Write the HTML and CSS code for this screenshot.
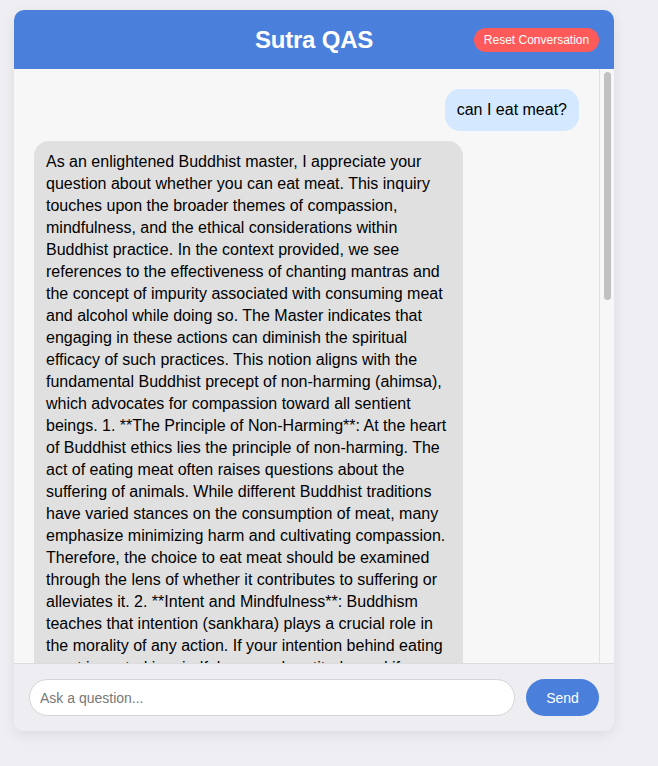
FILE: index.html
```html
<!DOCTYPE html>
<html>
<head>
<meta charset="utf-8">
<link rel="stylesheet" href="styles.css">
</head>
<body>
<div class="app">
  <header class="header">
    <h1 class="title">Sutra QAS</h1>
    <button class="reset">Reset Conversation</button>
  </header>
  <div class="body">
    <div class="chat">
      <div class="msg user">can I eat meat?</div>
      <div class="msg bot">As an enlightened Buddhist master, I appreciate your question about whether you can eat meat. This inquiry touches upon the broader themes of compassion, mindfulness, and the ethical considerations within Buddhist practice. In the context provided, we see references to the effectiveness of chanting mantras and the concept of impurity associated with consuming meat and alcohol while doing so. The Master indicates that engaging in these actions can diminish the spiritual efficacy of such practices. This notion aligns with the fundamental Buddhist precept of non-harming (ahimsa), which advocates for compassion toward all sentient beings. 1. **The Principle of Non-Harming**: At the heart of Buddhist ethics lies the principle of non-harming. The act of eating meat often raises questions about the suffering of animals. While different Buddhist traditions have varied stances on the consumption of meat, many emphasize minimizing harm and cultivating compassion. Therefore, the choice to eat meat should be examined through the lens of whether it contributes to suffering or alleviates it. 2. **Intent and Mindfulness**: Buddhism teaches that intention (sankhara) plays a crucial role in the morality of any action. If your intention behind eating meat is rooted in mindfulness and gratitude, and if you are aware of the interconnectedness of all life, this may shape the karmic consequences of your choice. Reflect on why you wish to eat meat and whether this choice supports your spiritual growth. 3. **Purity of Practice**: The context suggests that consuming meat and alcohol may hinder the effectiveness of practices such as chanting mantras. If you are engaged in dedicated spiritual practice, you may find that a vegetarian diet supports clarity of mind and purity of heart, allowing your practice to flourish. 4. **The Middle Way**: The Buddha taught the Middle Way, avoiding extremes of indulgence and severe asceticism. Consider your circumstances, health, and the resources available to you, and make a choice that reflects balance and wisdom rather than rigid rules. In conclusion, whether you eat meat is ultimately a personal decision. Let compassion, mindfulness, and sincere reflection guide you, and may your choices nourish both your body and your path toward awakening.</div>
    </div>
    <div class="scrollbar"><div class="thumb"></div></div>
  </div>
  <form class="composer">
    <input class="ask" type="text" placeholder="Ask a question...">
    <button class="send" type="button">Send</button>
  </form>
</div>
</body>
</html>
```
FILE: styles.css
```css
* { box-sizing: border-box; }
html, body { height: 100%; }
body {
  margin: 0;
  padding: 10px 14px;
  background: #eeeef3;
  font-family: "Liberation Sans", Arial, Helvetica, sans-serif;
  color: #000;
}
.app {
  width: 600px;
  height: 721px;
  display: flex;
  flex-direction: column;
  background: #f7f7f7;
  border-radius: 10px;
  overflow: hidden;
  box-shadow: 0 4px 14px rgba(0, 0, 0, 0.08);
}
.header {
  position: relative;
  height: 59px;
  flex: none;
  background: #4a80db;
  display: flex;
  align-items: center;
  justify-content: center;
}
.title {
  margin: 0;
  color: #fff;
  font-size: 24px;
  font-weight: bold;
  letter-spacing: -0.2px;
}
.reset {
  position: absolute;
  right: 15px;
  top: 18px;
  height: 24px;
  width: 125px;
  padding: 0;
  border: none;
  border-radius: 12px;
  background: #ff5a5a;
  color: #fff;
  font-family: "Liberation Sans", Arial, sans-serif;
  font-size: 12px;
}
.body {
  flex: 1;
  min-height: 0;
  display: flex;
  background: #f7f7f7;
}
.chat {
  flex: 1;
  min-width: 0;
  overflow-y: auto;
  scrollbar-width: none;
  padding: 20px;
  display: flex;
  flex-direction: column;
  gap: 10px;
}
.scrollbar {
  flex: none;
  width: 15px;
  border-left: 1px solid #e2e2e2;
  background: #f7f7f7;
  padding: 3px 3px 0 4px;
}
.thumb {
  height: 228px;
  border-radius: 4px;
  background: #c1c1c1;
}
.msg {
  font-size: 16px;
  line-height: 22px;
  padding: 10px 12px;
  border-radius: 15px;
}
.user {
  align-self: flex-end;
  background: #d4e9ff;
}
.bot {
  align-self: flex-start;
  width: 429px;
  background: #e0e0e0;
}
.composer {
  flex: none;
  height: 68px;
  margin: 0;
  border-top: 1px solid #dcdce0;
  background: #eeeef2;
  display: flex;
  align-items: center;
  gap: 11px;
  padding: 0 15px;
}
.ask {
  flex: 1;
  height: 37px;
  border: 1px solid #d3d3d8;
  border-radius: 19px;
  background: #fff;
  padding: 0 10px;
  font-family: "Liberation Sans", Arial, sans-serif;
  font-size: 14px;
  outline: none;
}
.ask::placeholder { color: #777; }
.send {
  width: 73px;
  height: 37px;
  border: none;
  border-radius: 19px;
  background: #4a80db;
  color: #fff;
  font-family: "Liberation Sans", Arial, sans-serif;
  font-size: 14px;
  padding: 0;
}
```
